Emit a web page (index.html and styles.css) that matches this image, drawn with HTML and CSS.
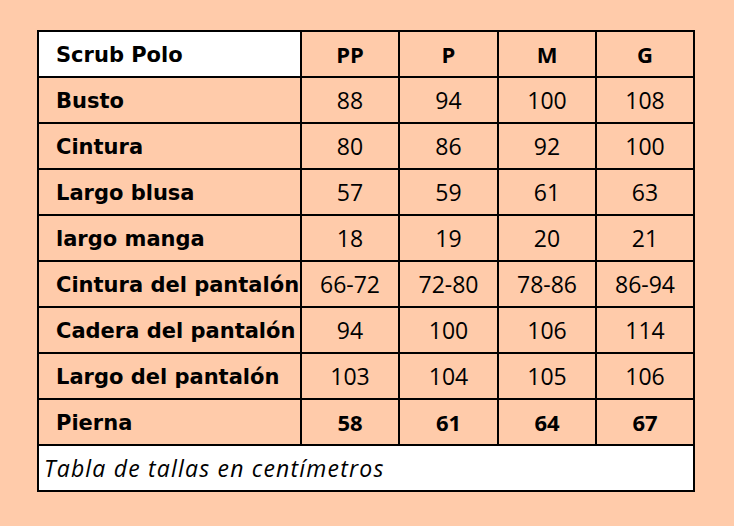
FILE: index.html
```html
<!DOCTYPE html>
<html lang="es">
<head>
<meta charset="utf-8">
<title>Scrub Polo - Tabla de tallas</title>
<link rel="stylesheet" href="styles.css">
</head>
<body>
<div class="page">
  <div class="chart">
    <div class="cell label white">Scrub Polo</div>
    <div class="cell num bold">PP</div>
    <div class="cell num bold">P</div>
    <div class="cell num bold">M</div>
    <div class="cell num bold">G</div>

    <div class="cell label">Busto</div>
    <div class="cell num">88</div>
    <div class="cell num">94</div>
    <div class="cell num">100</div>
    <div class="cell num">108</div>

    <div class="cell label">Cintura</div>
    <div class="cell num">80</div>
    <div class="cell num">86</div>
    <div class="cell num">92</div>
    <div class="cell num">100</div>

    <div class="cell label">Largo blusa</div>
    <div class="cell num">57</div>
    <div class="cell num">59</div>
    <div class="cell num">61</div>
    <div class="cell num">63</div>

    <div class="cell label">largo manga</div>
    <div class="cell num">18</div>
    <div class="cell num">19</div>
    <div class="cell num">20</div>
    <div class="cell num">21</div>

    <div class="cell label">Cintura del pantalón</div>
    <div class="cell num">66-72</div>
    <div class="cell num">72-80</div>
    <div class="cell num">78-86</div>
    <div class="cell num">86-94</div>

    <div class="cell label">Cadera del pantalón</div>
    <div class="cell num">94</div>
    <div class="cell num">100</div>
    <div class="cell num">106</div>
    <div class="cell num">114</div>

    <div class="cell label">Largo del pantalón</div>
    <div class="cell num">103</div>
    <div class="cell num">104</div>
    <div class="cell num">105</div>
    <div class="cell num">106</div>

    <div class="cell label">Pierna</div>
    <div class="cell num bold">58</div>
    <div class="cell num bold">61</div>
    <div class="cell num bold">64</div>
    <div class="cell num bold">67</div>

    <div class="cell note white">Tabla de tallas en centímetros</div>
  </div>
</div>
</body>
</html>
```

FILE: styles.css
```css
html, body {
  margin: 0;
  padding: 0;
  background: #ffcbaa;
}

.page {
  width: 734px;
  height: 526px;
  padding: 30px 0 0 37px;
  box-sizing: border-box;
}

.chart {
  display: grid;
  grid-template-columns: 261px 96px 97px 96px 96px;
  grid-auto-rows: 44px;
  gap: 2px;
  padding: 2px;
  background: #000;
  width: max-content;
  font-family: "Open Sans", "DejaVu Sans", sans-serif;
  color: #000;
}

.cell {
  background: #ffcbaa;
  display: flex;
  align-items: center;
  white-space: nowrap;
  overflow: visible;
  min-width: 0;
}

.white {
  background: #fff;
}

.label {
  padding-left: 17px;
  padding-top: 1px;
  font-family: "DejaVu Sans", "Open Sans", sans-serif;
  font-weight: 700;
  font-size: 21px;
  letter-spacing: 0;
  position: relative;
  z-index: 1;
}

.num {
  justify-content: center;
  font-size: 23px;
  font-weight: 400;
}

.bold {
  font-weight: 700;
  font-size: 22px;
}

.note {
  grid-column: 1 / -1;
  padding-left: 5px;
  font-style: italic;
  font-size: 23px;
  letter-spacing: 1.2px;
  font-weight: 400;
}
```
